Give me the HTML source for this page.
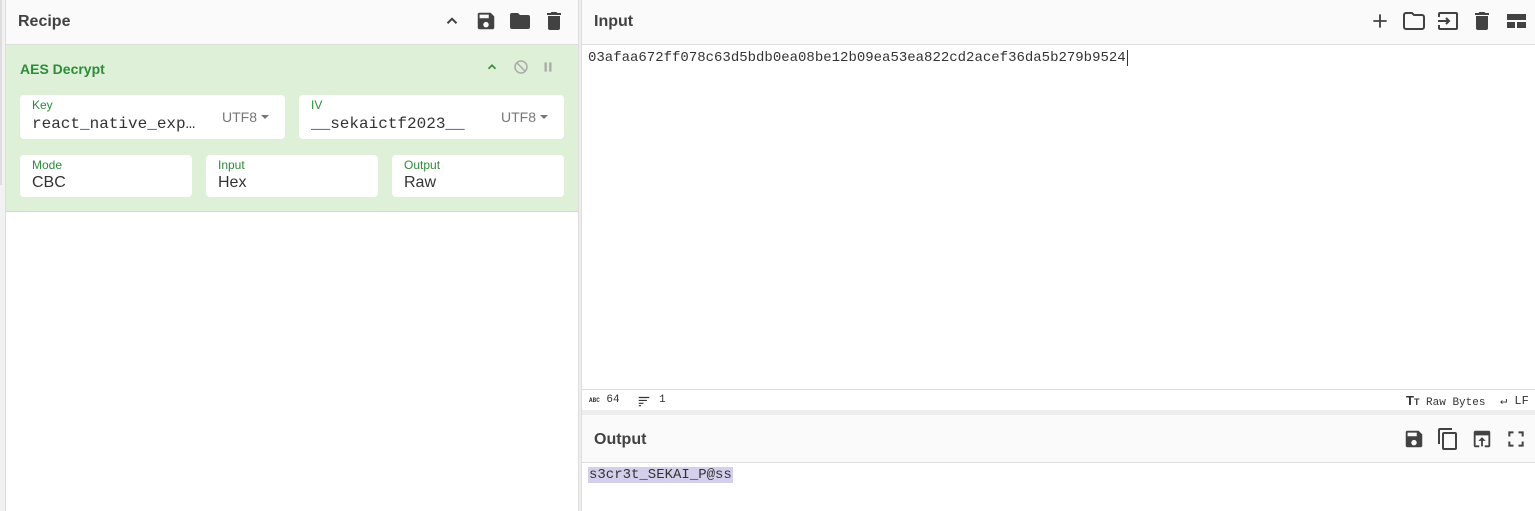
<!DOCTYPE html>
<html><head><style>
*{margin:0;padding:0;box-sizing:border-box}
body{width:1535px;height:511px;overflow:hidden;background:#fff;font-family:"Liberation Sans",sans-serif;position:relative}
.abs{position:absolute}
.hdr{background:#fafafa;border-bottom:1px solid #ddd;height:45px}
.title{font-size:16px;font-weight:bold;color:#424242;top:13px}
.mono{font-family:"Liberation Mono",monospace}
.fld{background:#fff;border-radius:4px;position:absolute}
.lbl{position:absolute;left:12px;top:3px;font-size:12px;color:#2e8b3a}
.val{position:absolute;left:12px;top:19px;font-size:16px;color:#333}
.utf{position:absolute;top:14px;font-size:14px;color:#777}
.caret{display:inline-block;border-left:4px solid transparent;border-right:4px solid transparent;border-top:4px solid #777;vertical-align:middle;margin-left:4px;margin-top:-3px}
svg{position:absolute}
</style></head><body>
<div class="abs" style="left:0;top:0;width:6px;height:511px;background:#f2f2f2;border-right:1px solid #ddd"></div>
<div class="abs" style="left:0;top:0;width:2px;height:185px;background:#ddd"></div>
<div class="abs" style="left:578px;top:0;width:4px;height:511px;background:#eee;border-left:1px solid #ddd;border-right:1px solid #ddd"></div>

<div class="abs hdr" style="left:6px;top:0;width:572px"></div>
<div class="abs title" style="left:18px">Recipe</div>
<svg style="left:443px;top:12px" width="18" height="18" viewBox="0 0 24 24"><path d="M6 15l6-6 6 6" fill="none" stroke="#424242" stroke-width="2.6"/></svg>
<svg style="left:475px;top:10px" width="22" height="22" viewBox="0 0 24 24"><path d="M17 3H5a2 2 0 0 0-2 2v14a2 2 0 0 0 2 2h14a2 2 0 0 0 2-2V7l-4-4zm-5 16a3 3 0 1 1 0-6 3 3 0 0 1 0 6zm3-10H5V5h10v4z" fill="#424242"/></svg>
<svg style="left:508px;top:9px" width="24" height="24" viewBox="0 0 24 24"><path d="M10 4H4a2 2 0 0 0-2 2v12a2 2 0 0 0 2 2h16a2 2 0 0 0 2-2V8a2 2 0 0 0-2-2h-8l-2-2z" fill="#424242"/></svg>
<svg style="left:542px;top:9px" width="24" height="24" viewBox="0 0 24 24"><path d="M6 19a2 2 0 0 0 2 2h8a2 2 0 0 0 2-2V7H6v12zM19 4h-3.5l-1-1h-5l-1 1H5v2h14V4z" fill="#424242"/></svg>

<div class="abs" style="left:6px;top:45px;width:572px;height:167px;background:#dff0d8;border-bottom:1px solid #c9e2bf"></div>
<div class="abs" style="left:20px;top:61px;font-size:14px;font-weight:bold;color:#2e8b3a">AES Decrypt</div>
<svg style="left:485px;top:60px" width="14" height="14" viewBox="0 0 24 24"><path d="M6 15l6-6 6 6" fill="none" stroke="#3a8f3a" stroke-width="3"/></svg>
<svg style="left:512px;top:58px" width="18" height="18" viewBox="0 0 24 24"><circle cx="12" cy="12" r="8" fill="none" stroke="#aaa" stroke-width="2"/><path d="M6.5 6.5l11 11" stroke="#aaa" stroke-width="2"/></svg>
<svg style="left:541px;top:60px" width="14" height="14" viewBox="0 0 24 24"><path d="M6 4h4v16H6zM14 4h4v16h-4z" fill="#aaa"/></svg>

<div class="fld" style="left:20px;top:95px;width:265px;height:44px"><div class="lbl">Key</div><div class="val mono" style="font-size:16px;top:20px">react_native_exp…</div><div class="utf" style="left:202px">UTF8<span class="caret"></span></div></div>
<div class="fld" style="left:299px;top:95px;width:265px;height:44px"><div class="lbl">IV</div><div class="val mono" style="font-size:16px;top:20px">__sekaictf2023__</div><div class="utf" style="left:202px">UTF8<span class="caret"></span></div></div>
<div class="fld" style="left:20px;top:155px;width:172px;height:42px"><div class="lbl">Mode</div><div class="val">CBC</div></div>
<div class="fld" style="left:206px;top:155px;width:172px;height:42px"><div class="lbl">Input</div><div class="val">Hex</div></div>
<div class="fld" style="left:392px;top:155px;width:172px;height:42px"><div class="lbl">Output</div><div class="val">Raw</div></div>

<div class="abs hdr" style="left:582px;top:0;width:953px"></div>
<div class="abs title" style="left:594px">Input</div>
<svg style="left:1370px;top:11px" width="20" height="20" viewBox="0 0 24 24"><path d="M12 4v16M4 12h16" stroke="#424242" stroke-width="2.2"/></svg>
<svg style="left:1402px;top:9px" width="24" height="24" viewBox="0 0 24 24"><path d="M10 4H4a2 2 0 0 0-2 2v12a2 2 0 0 0 2 2h16a2 2 0 0 0 2-2V8a2 2 0 0 0-2-2h-8l-2-2z" fill="none" stroke="#424242" stroke-width="2"/></svg>
<svg style="left:1436px;top:9px" width="24" height="24" viewBox="0 0 24 24"><path d="M3 8V5a1 1 0 0 1 1-1h16a1 1 0 0 1 1 1v14a1 1 0 0 1-1 1H4a1 1 0 0 1-1-1v-3M2 12h11M10 9l3 3-3 3" fill="none" stroke="#424242" stroke-width="2"/></svg>
<svg style="left:1470px;top:9px" width="24" height="24" viewBox="0 0 24 24"><path d="M6 19a2 2 0 0 0 2 2h8a2 2 0 0 0 2-2V7H6v12zM19 4h-3.5l-1-1h-5l-1 1H5v2h14V4z" fill="#424242"/></svg>
<svg style="left:1504px;top:9px" width="24" height="24" viewBox="0 0 24 24"><path d="M3 5h19v6H3zM3 13h8v6H3zM13 13h9v6h-9z" fill="#424242"/></svg>
<div class="abs mono" style="left:588px;top:50px;font-size:14px;color:#333">03afaa672ff078c63d5bdb0ea08be12b09ea53ea822cd2acef36da5b279b9524<span style="border-left:1px solid #333;margin-left:1px"></span></div>

<div class="abs" style="left:582px;top:389px;width:953px;height:22px;border-top:1px solid #ddd;background:#fff"></div>
<div class="abs mono" style="left:589px;top:394px;font-size:11px;color:#333"><span style="font-size:6px;font-weight:bold">ABC</span> 64</div>
<svg style="left:637px;top:394px" width="14" height="14" viewBox="0 0 24 24"><path d="M3 6h18M3 11h14M3 16h8M3 20h4" stroke="#333" stroke-width="2"/></svg>
<div class="abs mono" style="left:659px;top:394px;font-size:11px;color:#333">1</div>
<div class="abs mono" style="left:1406px;top:393px;font-size:11px;color:#333"><b style="font-family:'Liberation Sans';font-size:13px">T</b><b style="font-family:'Liberation Sans';font-size:9px">T</b> Raw Bytes</div>
<div class="abs mono" style="left:1500px;top:393px;font-size:12px;color:#333">↵ LF</div>
<div class="abs" style="left:582px;top:410px;width:953px;height:5px;background:#eee"></div>

<div class="abs hdr" style="left:582px;top:415px;width:953px;height:48px"></div>
<div class="abs title" style="left:594px;top:431px">Output</div>
<svg style="left:1403px;top:428px" width="22" height="22" viewBox="0 0 24 24"><path d="M17 3H5a2 2 0 0 0-2 2v14a2 2 0 0 0 2 2h14a2 2 0 0 0 2-2V7l-4-4zm-5 16a3 3 0 1 1 0-6 3 3 0 0 1 0 6zm3-10H5V5h10v4z" fill="#424242"/></svg>
<svg style="left:1436px;top:427px" width="24" height="24" viewBox="0 0 24 24"><path d="M16 1H4a2 2 0 0 0-2 2v14h2V3h12V1zm3 4H8a2 2 0 0 0-2 2v14a2 2 0 0 0 2 2h11a2 2 0 0 0 2-2V7a2 2 0 0 0-2-2zm0 16H8V7h11v14z" fill="#424242"/></svg>
<svg style="left:1471px;top:428px" width="22" height="22" viewBox="0 0 24 24"><path d="M19 3H5a2 2 0 0 0-2 2v14a2 2 0 0 0 2 2h4v-2H5V8h14v11h-4v2h4a2 2 0 0 0 2-2V5a2 2 0 0 0-2-2zm-7 7l-4 4h3v6h2v-6h3l-4-4z" fill="#424242"/></svg>
<svg style="left:1506px;top:429px" width="20" height="20" viewBox="0 0 24 24"><path d="M4 9V4h5M15 4h5v5M20 15v5h-5M9 20H4v-5" fill="none" stroke="#424242" stroke-width="2.4"/></svg>
<div class="abs mono" style="left:588px;top:467px;font-size:14px;color:#333;background:#d4d0ec;padding:0 1px">s3cr3t_SEKAI_P@ss</div>
</body></html>
